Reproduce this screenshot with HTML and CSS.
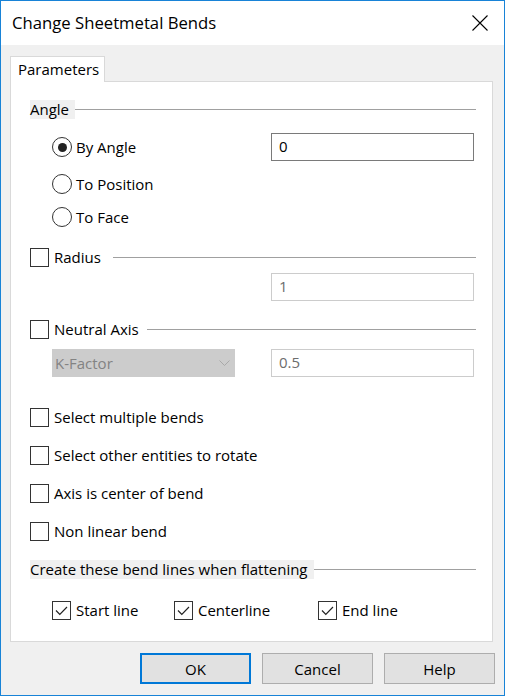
FILE: index.html
```html
<!DOCTYPE html>
<html>
<head>
<meta charset="utf-8">
<title>Change Sheetmetal Bends</title>
<link rel="stylesheet" href="styles.css">
</head>
<body>
<div class="window">
  <div class="titlebar">
    <span class="title">Change Sheetmetal Bends</span>
    <svg class="close" width="16" height="16" viewBox="0 0 16 16"><path d="M0.5 0.5 L15.5 15.5 M15.5 0.5 L0.5 15.5" stroke="#000" stroke-width="1.1" fill="none"/></svg>
  </div>
  <div class="client">
    <div class="tabs"><div class="tab">Parameters</div></div>
    <div class="panel">
      <div class="head head-angle"><span class="glabel shaded">Angle</span><span class="rule"></span></div>

      <div class="row row-1">
        <label class="opt indent"><span class="radio checked"></span>By Angle</label>
        <div class="field">0</div>
      </div>
      <div class="row row-2">
        <label class="opt indent"><span class="radio"></span>To Position</label>
      </div>
      <div class="row row-3">
        <label class="opt indent"><span class="radio"></span>To Face</label>
      </div>

      <div class="head head-radius"><span class="check"></span><span class="glabel">Radius</span><span class="rule rule-radius"></span></div>
      <div class="row row-radius">
        <div class="field disabled">1</div>
      </div>

      <div class="head head-neutral"><span class="check"></span><span class="glabel">Neutral Axis</span><span class="rule rule-neutral"></span></div>
      <div class="row row-neutral">
        <div class="combo indent">
          <span>K-Factor</span>
          <svg class="chev" width="11" height="7" viewBox="0 0 11 7"><path d="M0.5 0.5 L5.5 5.5 L10.5 0.5" stroke="#a9a9a9" stroke-width="1" fill="none"/></svg>
        </div>
        <div class="field disabled">0.5</div>
      </div>

      <label class="crow crow-first"><span class="check"></span>Select multiple bends</label>
      <label class="crow"><span class="check"></span>Select other entities to rotate</label>
      <label class="crow"><span class="check"></span>Axis is center of bend</label>
      <label class="crow"><span class="check"></span>Non linear bend</label>

      <div class="head head-create"><span class="glabel shaded">Create these bend lines when flattening</span><span class="rule"></span></div>
      <div class="lines">
        <label class="opt lines-start"><span class="check on"><svg width="17" height="17" viewBox="0 0 17 17"><path d="M3 8.5 L6.8 12.3 L14 5" stroke="#222" stroke-width="1.2" fill="none"/></svg></span>Start line</label>
        <label class="opt lines-center"><span class="check on"><svg width="17" height="17" viewBox="0 0 17 17"><path d="M3 8.5 L6.8 12.3 L14 5" stroke="#222" stroke-width="1.2" fill="none"/></svg></span>Centerline</label>
        <label class="opt"><span class="check on"><svg width="17" height="17" viewBox="0 0 17 17"><path d="M3 8.5 L6.8 12.3 L14 5" stroke="#222" stroke-width="1.2" fill="none"/></svg></span>End line</label>
      </div>
    </div>
    <div class="buttons">
      <div class="btn default">OK</div>
      <div class="btn">Cancel</div>
      <div class="btn">Help</div>
    </div>
  </div>
</div>
</body>
</html>
```
FILE: styles.css
```css
* { box-sizing: border-box; }
html, body { margin: 0; padding: 0; }
body {
  width: 505px;
  height: 696px;
  font-family: "Open Sans", "Noto Sans", sans-serif;
  font-size: 15px;
  color: #000;
  background: #fff;
}
.window {
  width: 505px;
  height: 696px;
  border: 1px solid #1883d7;
  display: flex;
  flex-direction: column;
}
.titlebar {
  height: 44px;
  flex: none;
  background: #fff;
  display: flex;
  align-items: center;
  padding-left: 11px;
  padding-right: 16px;
}
.title {
  font-size: 16.7px;
  flex: 1;
  line-height: 20px;
  margin-top: -1px;
}
.close { display: block; margin-top: -1px; }
.client {
  flex: 1;
  background: #f0f0f0;
  padding: 11px 0 11px 9px;
  display: flex;
  flex-direction: column;
}
.tabs { display: flex; height: 25px; }
.tab {
  width: 95px;
  height: 26px;
  background: #fff;
  border: 1px solid #d9d9d9;
  border-bottom: none;
  padding-left: 7px;
  line-height: 24px;
  position: relative;
  z-index: 1;
}
.panel {
  width: 483px;
  height: 561px;
  background: #fff;
  border: 1px solid #d9d9d9;
  padding: 0 16px 0 19px;
  display: flex;
  flex-direction: column;
}
.head {
  height: 19px;
  display: flex;
  align-items: center;
  flex: none;
}
.glabel { line-height: 19px; height: 19px; }
.shaded { background: #f0f0f0; padding-right: 6px; }
.rule { flex: 1; height: 1px; background: #a0a0a0; margin-top: 0; }
.rule-radius { margin-left: 12px; }
.rule-neutral { margin-left: 8px; }
.head-angle { margin-top: 18px; }
.head-radius { margin-top: 17px; }
.head-neutral { margin-top: 19px; }
.head-create { margin-top: 19px; }

.row { height: 28px; display: flex; align-items: center; flex: none; }
.row-1 { margin-top: 14px; }
.row-2 { margin-top: 9px; }
.row-3 { margin-top: 5px; }
.row-radius { margin-top: 6px; }
.row-neutral { margin-top: 10px; }

.indent { margin-left: 22px; }
.opt { display: flex; align-items: center; line-height: 20px; }

.radio {
  width: 20px;
  height: 20px;
  border: 1px solid #333;
  border-radius: 50%;
  margin-right: 4px;
  display: flex;
  align-items: center;
  justify-content: center;
  flex: none;
}
.radio.checked::after {
  content: "";
  width: 9px;
  height: 9px;
  border-radius: 50%;
  background: #222;
}
.check {
  width: 19px;
  height: 19px;
  border: 1px solid #333;
  margin-right: 5px;
  flex: none;
  display: flex;
  align-items: center;
  justify-content: center;
}
.check svg { display: block; }

.field {
  width: 203px;
  height: 28px;
  margin-left: auto;
  margin-right: 2px;
  border: 1px solid #7a7a7a;
  padding-left: 7px;
  line-height: 25px;
  background: #fff;
}
.field.disabled { border-color: #cccccc; color: #6d6d6d; }

.combo {
  width: 183px;
  height: 28px;
  background: #cccccc;
  color: #838383;
  display: flex;
  align-items: center;
  padding-left: 3px;
  padding-right: 5px;
  line-height: 26px;
}
.combo span { flex: 1; }
.chev { display: block; margin-top: 0; }

.crow {
  height: 19px;
  display: flex;
  align-items: center;
  margin-top: 19px;
  line-height: 19px;
  flex: none;
}
.crow-first { margin-top: 31px; }

.lines {
  display: flex;
  align-items: center;
  height: 20px;
  margin-top: 21px;
  padding-left: 22px;
}
.lines-start { width: 122px; }
.lines-center { width: 144px; }

.buttons {
  display: flex;
  margin-top: 11px;
  padding-left: 130px;
  gap: 11px;
}
.btn {
  width: 111px;
  height: 31px;
  background: #e1e1e1;
  border: 1px solid #adadad;
  display: flex;
  align-items: center;
  justify-content: center;
  line-height: 20px;
}
.btn.default { border: 2px solid #0078d7; }
```
